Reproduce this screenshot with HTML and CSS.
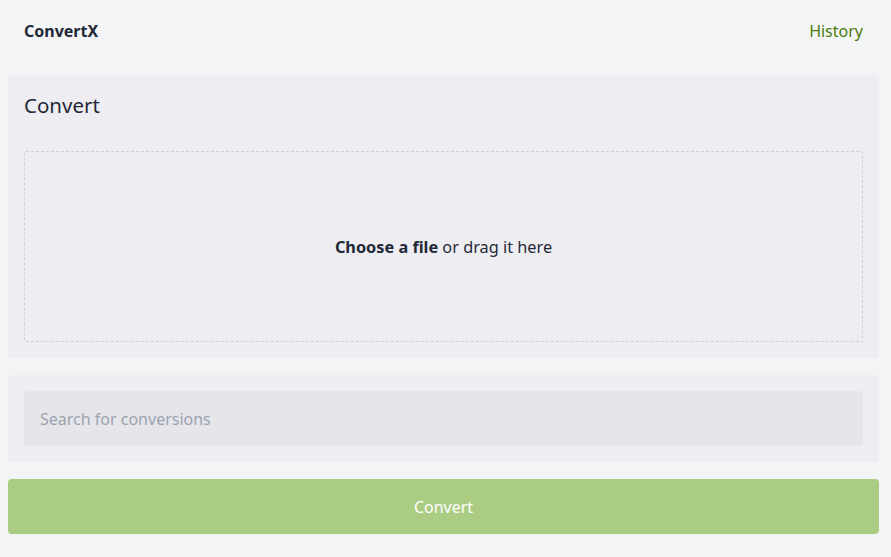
FILE: index.html
```html
<!DOCTYPE html>
<html>
<head>
    <title>ConvertX</title>
    <link rel="stylesheet" href="styles.css">
</head>
<body>
    <header class="header">
        <a class="brand" href="#">ConvertX</a>
        <a class="nav-link" href="#">History</a>
    </header>

    <main class="container">
        <form class="convert-form" onsubmit="return false">
            <div class="card">
                <h1 class="card-title">Convert</h1>
                <label class="dropzone" for="file">
                    <input type="file" id="file" class="file-input" multiple>
                    <span><strong>Choose a file</strong> or drag it here</span>
                </label>
            </div>

            <div class="card">
                <input type="search" class="search" placeholder="Search for conversions" autocomplete="off">
            </div>

            <button type="submit" class="button button-primary" disabled>Convert</button>
        </form>
    </main>
</body>
</html>
```

FILE: styles.css
```css
body {
    font-family: 'Noto Sans', 'Open Sans', sans-serif;
    margin: 0;
    padding: 0 12px 0 8px;
    background-color: #f3f4f6;
    color: #1f2937;
    font-size: 16px;
}
a {
    text-decoration: none;
}
.header {
    display: flex;
    justify-content: space-between;
    align-items: center;
    height: 62px;
    padding: 0 16px;
}
.brand {
    font-weight: 700;
    color: #1f2937;
}
.nav-link {
    color: #4d7c0f;
}
.convert-form {
    display: flex;
    flex-direction: column;
    gap: 17px;
    padding-top: 13px;
}
.card {
    background-color: #eeedf1;
    border-radius: 4px;
    padding: 16px;
}
.card-title {
    font-size: 20.5px;
    font-weight: 400;
    margin: 0 0 32px;
    line-height: 28px;
}
.dropzone {
    display: flex;
    align-items: center;
    justify-content: center;
    height: 189px;
    border: 1px dashed #cfcfd6;
    border-radius: 2px;
    font-size: 16.3px;
    cursor: pointer;
}
.file-input {
    display: none;
}
.search {
    display: block;
    width: 100%;
    height: 55px;
    box-sizing: border-box;
    padding: 0 16px;
    border: none;
    border-radius: 4px;
    background-color: #e5e5ea;
    font-family: inherit;
    font-size: 16px;
    color: #1f2937;
    outline: none;
}
.search::placeholder {
    color: #9ca3af;
}
.button {
    height: 55px;
    border: none;
    border-radius: 4px;
    font-family: inherit;
    font-size: 16px;
    cursor: pointer;
}
.button-primary {
    background-color: #abcc83;
    color: #fff;
}
.button-primary:disabled {
    cursor: not-allowed;
}
```
